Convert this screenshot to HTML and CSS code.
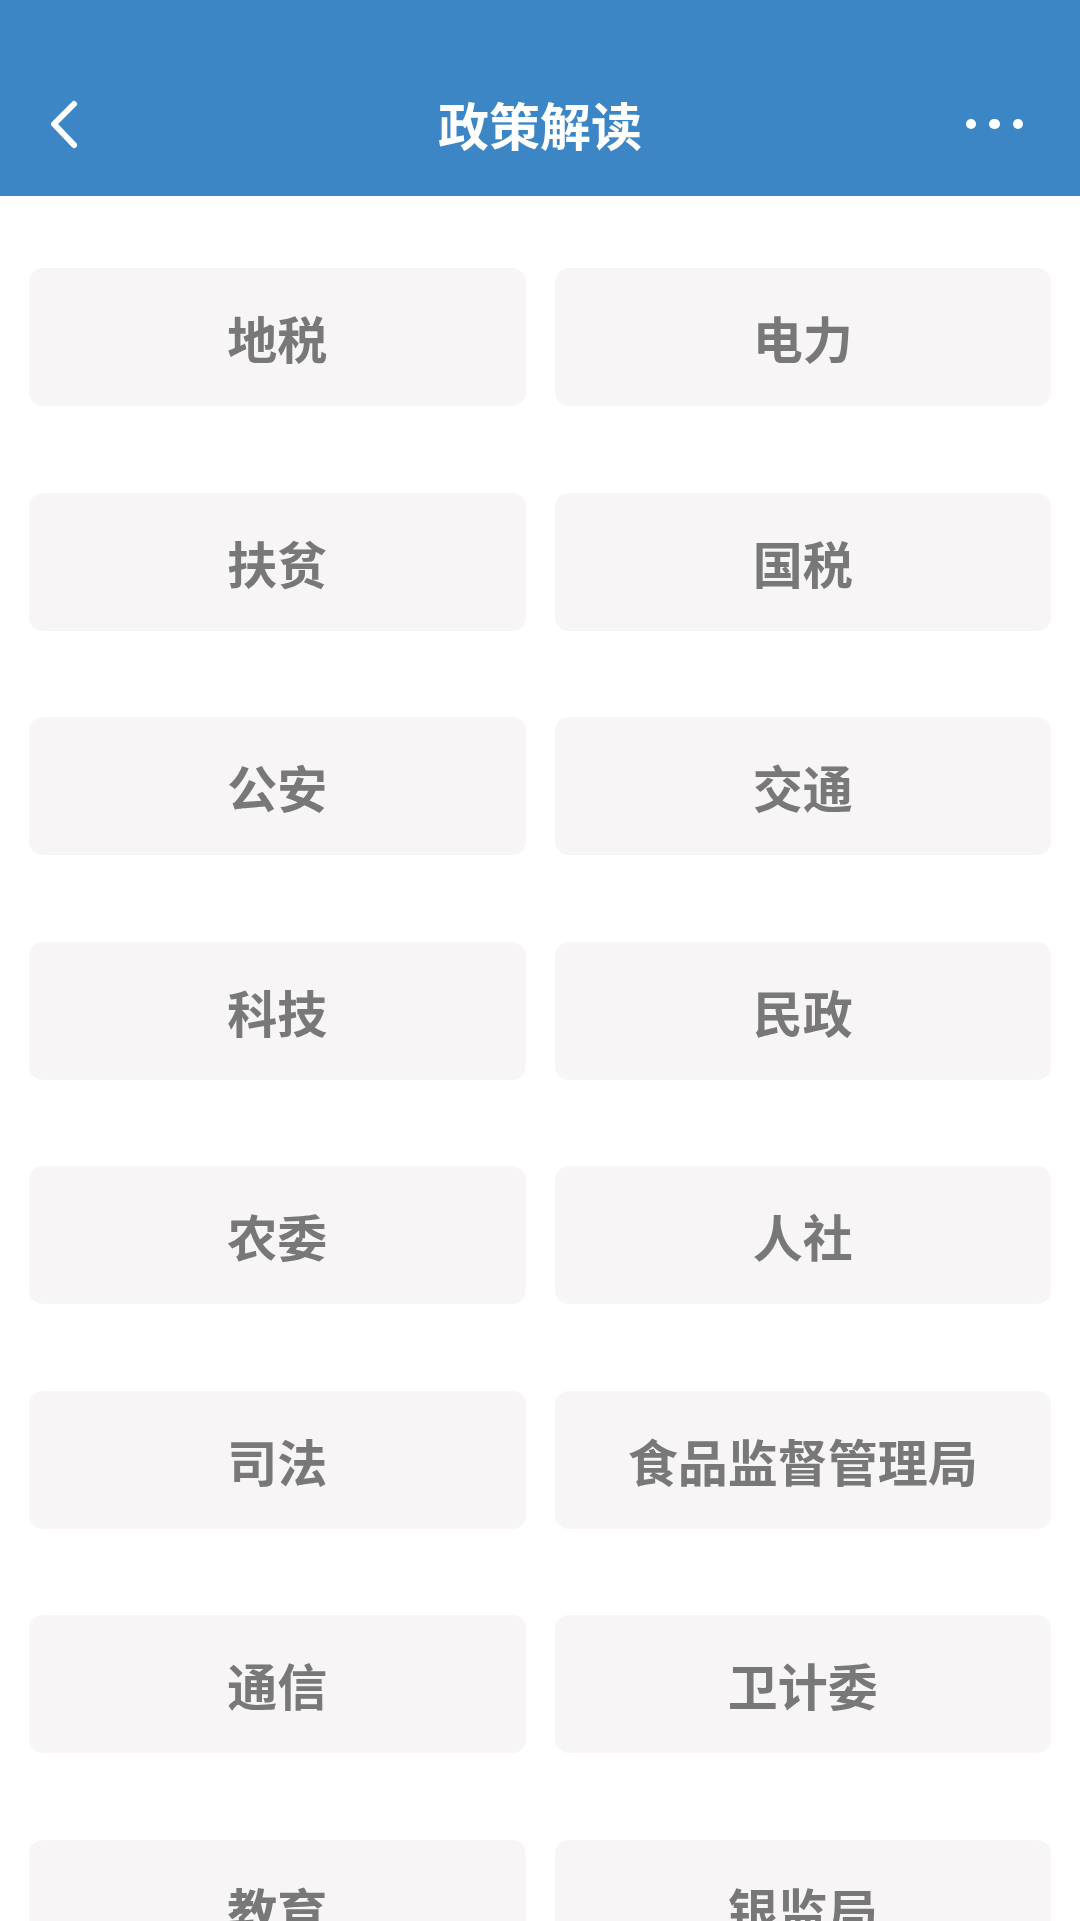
FILE: index.html
```html
<!DOCTYPE html>
<html>
<head>
  <meta charset="utf-8">
  <title>政策解读</title>
  <meta name="viewport" content="width=device-width, initial-scale=1">
  <link rel="stylesheet" href="styles.css">
</head>
<body>
  <div class="header">
    <div class="bar">
      <span class="back">
        <svg width="40" height="60" viewBox="0 0 40 60">
          <polyline points="26,10 6,30 26,51" fill="none" stroke="#fff" stroke-width="6" stroke-linecap="round" stroke-linejoin="round"/>
        </svg>
      </span>
      <h1 class="title">政策解读</h1>
      <span class="more"><i></i><i></i><i></i></span>
    </div>
  </div>

  <!-- 部门列表 -->
  <div class="grid">
    <div class="item">地税</div>
    <div class="item">电力</div>
    <div class="item">扶贫</div>
    <div class="item">国税</div>
    <div class="item">公安</div>
    <div class="item">交通</div>
    <div class="item">科技</div>
    <div class="item">民政</div>
    <div class="item">农委</div>
    <div class="item">人社</div>
    <div class="item">司法</div>
    <div class="item">食品监督管理局</div>
    <div class="item">通信</div>
    <div class="item">卫计委</div>
    <div class="item">教育</div>
    <div class="item">银监局</div>
  </div>
</body>
</html>
```

FILE: styles.css
```css
body { margin: 0; background: #fff; font-family: "Noto Sans CJK SC", "Noto Sans", sans-serif; overflow: hidden; }
.header { background: #3c86c5; height: 196px; padding-top: 52px; box-sizing: border-box; }
.bar { height: 144px; display: flex; align-items: center; justify-content: space-between; padding: 0 57px 0 48px; position: relative; }
.back { display: flex; width: 40px; height: 60px; }
.title { position: absolute; left: 0; right: 0; margin: 0; text-align: center; color: #fff;
         font-size: 51px; font-weight: 700; line-height: 144px; pointer-events: none; }
.more { display: flex; gap: 13px; }
.more i { width: 10.5px; height: 10.5px; border-radius: 50%; background: #fff; display: block; }
.grid { display: grid; grid-template-columns: 1fr 1fr; column-gap: 29px; row-gap: 86.5px;
        padding: 72px 29px 0; }
.item { height: 138px; background: #f7f5f6; border-radius: 14px; display: flex; align-items: center;
        justify-content: center; color: #787878; font-size: 50px; font-weight: 700; }
```
